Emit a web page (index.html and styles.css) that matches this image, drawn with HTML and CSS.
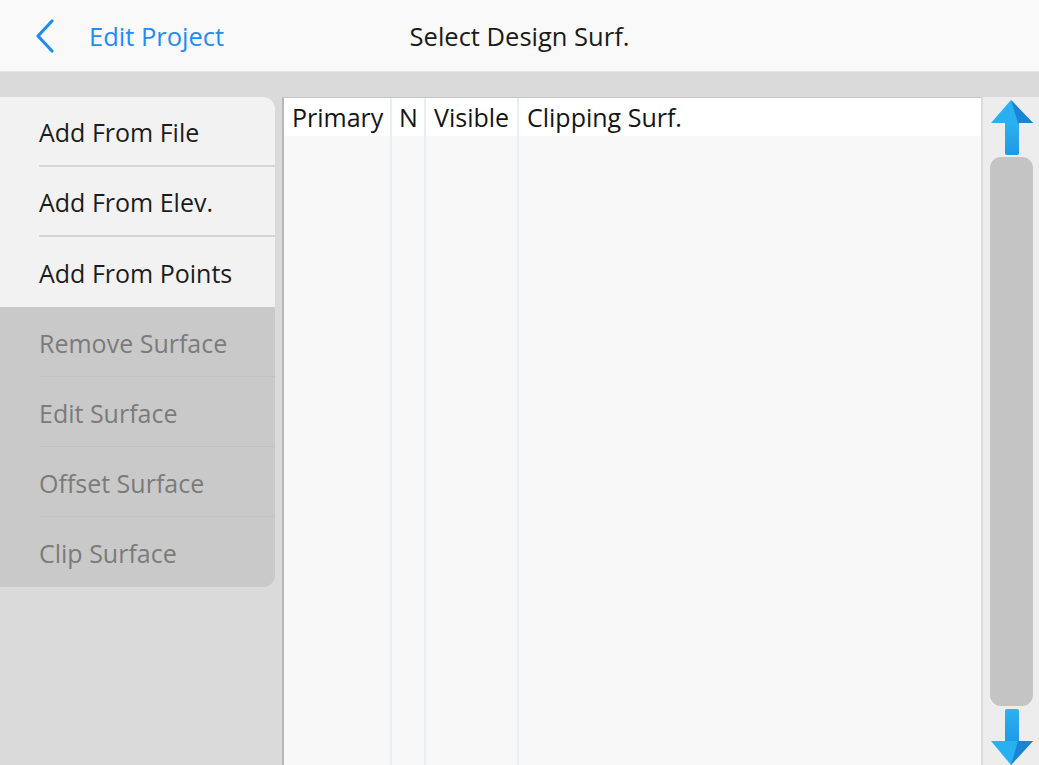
FILE: index.html
```html
<!DOCTYPE html>
<html>
<head>
<meta charset="utf-8">
<link rel="stylesheet" href="styles.css">
</head>
<body>
<header class="topbar">
  <div class="back">
    <svg class="chev" width="22" height="34" viewBox="0 0 22 34"><path d="M18 2 L4 17 L18 32" fill="none" stroke="#1f8cf3" stroke-width="3.2" stroke-linecap="round" stroke-linejoin="round"/></svg>
    <span class="back-label">Edit Project</span>
  </div>
  <div class="title">Select Design Surf.</div>
  <div class="spacer"></div>
</header>
<main class="content">
  <nav class="menu">
    <div class="item"><span>Add From File</span></div>
    <div class="item"><span>Add From Elev.</span></div>
    <div class="item"><span>Add From Points</span></div>
    <div class="item disabled"><span>Remove Surface</span></div>
    <div class="item disabled"><span>Edit Surface</span></div>
    <div class="item disabled"><span>Offset Surface</span></div>
    <div class="item disabled last"><span>Clip Surface</span></div>
  </nav>
  <section class="table">
    <div class="col c1"><div class="th">Primary</div></div>
    <div class="col c2"><div class="th">N</div></div>
    <div class="col c3"><div class="th">Visible</div></div>
    <div class="col c4"><div class="th">Clipping Surf.</div></div>
  </section>
  <aside class="scroll">
    <svg class="arrow" width="44" height="56" viewBox="0 0 44 56">
      <defs>
        <linearGradient id="gu" x1="0" y1="0" x2="0" y2="1">
          <stop offset="0" stop-color="#2bb3f0"/>
          <stop offset="1" stop-color="#1e98e6"/>
        </linearGradient>
      </defs>
      <path d="M15 22 H29 V53 Q29 55 27 55 H17 Q15 55 15 53 Z" fill="url(#gu)"/>
      <path d="M21 0 L43 23 H1 Z" fill="#29b0f0"/>
      <path d="M21 0 L43 23 H28 Z" fill="#1a83d6"/>
    </svg>
    <div class="thumb"></div>
    <svg class="arrow" width="44" height="56" viewBox="0 0 44 56">
      <defs>
        <linearGradient id="gd" x1="0" y1="0" x2="0" y2="1">
          <stop offset="0" stop-color="#2bb3f0"/>
          <stop offset="1" stop-color="#1e98e6"/>
        </linearGradient>
      </defs>
      <path d="M15 2 Q15 0 17 0 H27 Q29 0 29 2 V34 H15 Z" fill="url(#gd)"/>
      <path d="M1 32 H43 L21 56 Z" fill="#29b0f0"/>
      <path d="M28 32 H43 L21 56 Z" fill="#1a83d6"/>
    </svg>
  </aside>
</main>
</body>
</html>
```
FILE: styles.css
```css
html, body {
  margin: 0;
  padding: 0;
}
body {
  width: 1039px;
  height: 765px;
  overflow: hidden;
  background: #dadada;
  font-family: "Open Sans", "Noto Sans", sans-serif;
  color: #1b1b1b;
}
.topbar {
  height: 71px;
  background: #f9f9f9;
  border-bottom: 1px solid #e4e4e4;
  display: grid;
  grid-template-columns: 1fr auto 1fr;
  align-items: center;
}
.back {
  display: flex;
  align-items: center;
  padding-left: 34px;
  gap: 33px;
}
.chev {
  display: block;
}
.back-label {
  color: #1f8cf3;
  font-size: 25.5px;
}
.title {
  font-size: 25.5px;
  color: #1b1b1b;
}
.content {
  display: flex;
  padding-top: 25px;
  height: 668px;
}
.menu {
  width: 275px;
  align-self: flex-start;
  border-radius: 0 12px 12px 0;
  overflow: hidden;
  margin-right: 7px;
}
.item {
  height: 70px;
  background: #f2f2f2;
  padding-left: 39px;
  display: flex;
}
.item span {
  flex: 1;
  display: flex;
  align-items: center;
  border-bottom: 2px solid #d6d6d6;
  font-size: 25px;
  color: #1c1c1c;
  padding-top: 2px;
}
.item:nth-child(3) span {
  border-bottom: none;
}
.item.disabled {
  background: #c9c9c9;
}
.item.disabled span {
  color: #7b7b7b;
  border-bottom: 1px solid #c2c2c2;
}
.item.last span {
  border-bottom: none;
}
.table {
  width: 697px;
  background: #f8f8f8;
  border-left: 2px solid #b8b8b8;
  border-top: 1px solid #c4c4c4;
  border-right: 2px solid #dcdcdc;
  display: flex;
  position: relative;
}
.table::before {
  content: "";
  position: absolute;
  left: 0;
  right: 0;
  top: 0;
  height: 38px;
  background: #ffffff;
}
.col {
  position: relative;
  border-right: 2px solid #e8eef5;
}
.col.c1 { width: 106px; }
.col.c2 { width: 32px; }
.col.c3 { width: 91px; }
.col.c4 { flex: 1; border-right: none; }
.th {
  height: 38px;
  display: flex;
  align-items: center;
  padding-left: 8px;
  font-size: 25px;
  color: #151515;
  background: #ffffff;
  white-space: nowrap;
}
.c2 .th {
  padding-left: 7px;
}
.scroll {
  flex: 1;
  background: #ededed;
  display: flex;
  flex-direction: column;
  align-items: center;
  padding-top: 3px;
}
.arrow {
  display: block;
  margin-left: 2px;
}
.thumb {
  width: 43px;
  flex: 1;
  margin: 1px 0 3px 0;
  background: #c4c4c4;
  border-radius: 11px;
}
```
